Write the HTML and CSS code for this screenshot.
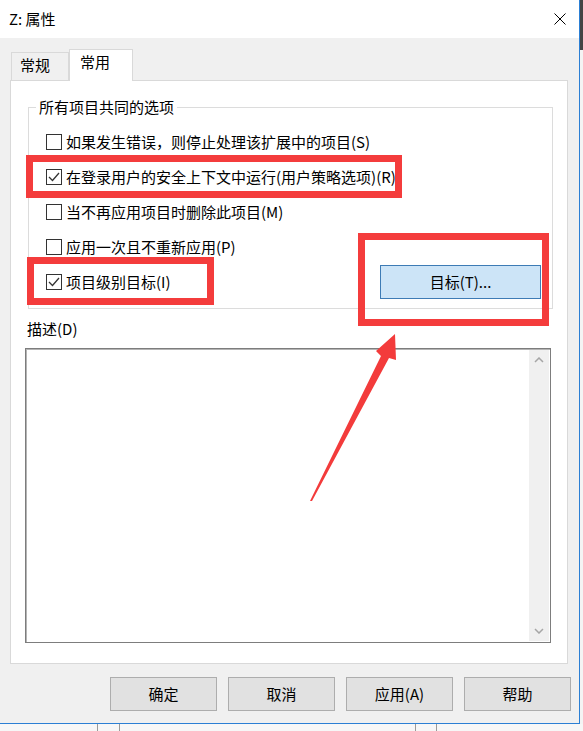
FILE: index.html
```html
<!DOCTYPE html>
<html lang="zh-CN">
<head>
<meta charset="utf-8">
<title>Z: 属性</title>
<link rel="stylesheet" href="styles.css">
</head>
<body>
<div class="screen">
  <div class="window">
    <div class="titlebar">
      <span class="title">Z: 属性</span>
      <svg class="close" width="12" height="12" viewBox="0 0 12 12"><path d="M0.5 0.5 L11.5 11.5 M11.5 0.5 L0.5 11.5" stroke="#000" stroke-width="1" fill="none"/></svg>
    </div>
    <div class="client">
      <div class="tabs">
        <div class="tab">常规</div>
        <div class="tab active">常用</div>
      </div>
      <div class="panel">
        <fieldset class="group">
          <legend>所有项目共同的选项</legend>
          <div class="options">
            <div class="row"><span class="cb"></span>如果发生错误，则停止处理该扩展中的项目(S)</div>
            <div class="row"><span class="cb"><svg width="14" height="14" viewBox="0 0 14 14"><path d="M2 7 L5.5 10.5 L12 3" stroke="#333" stroke-width="1.3" fill="none"/></svg></span>在登录用户的安全上下文中运行(用户策略选项)(R)</div>
            <div class="row"><span class="cb"></span>当不再应用项目时删除此项目(M)</div>
            <div class="row"><span class="cb"></span>应用一次且不重新应用(P)</div>
            <div class="row"><span class="cb"><svg width="14" height="14" viewBox="0 0 14 14"><path d="M2 7 L5.5 10.5 L12 3" stroke="#333" stroke-width="1.3" fill="none"/></svg></span>项目级别目标(I)<button class="target">目标(T)...</button></div>
          </div>
        </fieldset>
        <div class="desc-label">描述(D)</div>
        <div class="desc">
          <div class="desc-text"></div>
          <div class="vscroll">
            <span class="arrow"><svg width="10" height="6" viewBox="0 0 10 6"><path d="M1 5 L5 1 L9 5" stroke="#a6a6a6" stroke-width="1.5" fill="none"/></svg></span>
            <span class="arrow"><svg width="10" height="6" viewBox="0 0 10 6"><path d="M1 1 L5 5 L9 1" stroke="#a6a6a6" stroke-width="1.5" fill="none"/></svg></span>
          </div>
        </div>
      </div>
      <div class="buttons">
        <button class="btn">确定</button>
        <button class="btn">取消</button>
        <button class="btn">应用(A)</button>
        <button class="btn">帮助</button>
      </div>
    </div>
  </div>
  <div class="edge"></div>

  <div class="mark mark-run"></div>
  <div class="mark mark-level"></div>
  <div class="mark mark-target"></div>
  <svg class="pointer" width="583" height="731" viewBox="0 0 583 731">
    <polygon points="310,501 381,356 376,351 395,334 396,360 389,358 312,501" fill="#f33b3b"/>
  </svg>
</div>
<div class="taskbar"></div>
</body>
</html>
```

FILE: styles.css
```css
* { box-sizing: border-box; }

html, body {
  margin: 0;
  padding: 0;
  background: #f7f7f7;
}

body {
  font-family: "Noto Sans CJK SC", "Microsoft YaHei", sans-serif;
  font-size: 15px;
  line-height: 20px;
  color: #000;
  width: 583px;
  height: 731px;
  overflow: hidden;
}

.screen {
  position: relative;
  display: flex;
  height: 724px;
}

.window {
  width: 580px;
  height: 724px;
  background: #f0f0f0;
  border-right: 1px solid #2b7fd4;
  border-bottom: 1px solid #2b7fd4;
  display: flex;
  flex-direction: column;
}

.edge {
  width: 3px;
  height: 724px;
  background: linear-gradient(#444 0 50px, #f4f4f4 50px);
}

.titlebar {
  height: 38px;
  background: #fff;
  display: flex;
  align-items: center;
  justify-content: space-between;
  padding: 0 13px 0 9px;
}

.title { font-size: 15px; }

.close { display: block; }

.client {
  padding-top: 11px;
  flex: 1;
}

.tabs {
  display: flex;
  align-items: flex-end;
  height: 31px;
  margin-left: 11px;
}

.tab {
  height: 28px;
  width: 58px;
  padding: 2px 0 0 8px;
  border: 1px solid #d9d9d9;
  border-bottom: none;
  background: #f0f0f0;
}

.tab.active {
  position: relative;
  z-index: 1;
  height: 32px;
  width: 64px;
  margin-bottom: -1px;
  padding-left: 10px;
  background: #fff;
}

.panel {
  margin-left: 10px;
  width: 558px;
  height: 584px;
  background: #fff;
  border: 1px solid #d9d9d9;
  padding-top: 0;
}

.group {
  margin: 16px 0 0 17px;
  width: 525px;
  min-width: 0;
  border: 1px solid #dcdcdc;
  padding: 15px 11px 16px 17px;
}

.group legend {
  padding: 0 3px;
  margin-left: -10px;
  line-height: 20px;
}

.options {
  display: flex;
  flex-direction: column;
  gap: 15px;
}

.row {
  display: flex;
  align-items: center;
  height: 20px;
  white-space: nowrap;
}

.cb {
  width: 16px;
  height: 16px;
  border: 1px solid #333;
  background: #fff;
  margin-right: 4px;
  flex: none;
  display: flex;
  align-items: center;
  justify-content: center;
}

.cb svg { display: block; }

.target {
  margin: -7px 0 -7px auto;
  width: 161px;
  height: 34px;
  background: #cce4f7;
  border: 1px solid #3d7bb5;
  font: inherit;
  color: #000;
  padding: 0;
}

.desc-label {
  margin: 10px 0 0 16px;
}

.desc {
  margin: 9px 0 0 14px;
  width: 526px;
  height: 295px;
  border: 1px solid #7d7d7d;
  box-shadow: inset 1px 1px 0 #b4b4b4;
  display: flex;
  background: #fff;
}

.desc-text { flex: 1; }

.vscroll {
  width: 20px;
  margin: 1px;
  background: #f0f0f0;
  display: flex;
  flex-direction: column;
  justify-content: space-between;
}

.arrow {
  height: 20px;
  display: flex;
  align-items: center;
  justify-content: center;
}

.arrow svg { display: block; }

.buttons {
  margin-top: 13px;
  display: flex;
  justify-content: flex-end;
  gap: 11px;
  padding-right: 8px;
}

.btn {
  width: 107px;
  height: 34px;
  background: #e1e1e1;
  border: 1px solid #adadad;
  font: inherit;
  color: #000;
  padding: 0;
}

.mark {
  position: absolute;
  border: 7px solid #f43c3c;
}

.mark-run { left: 26px; top: 155px; width: 376px; height: 43px; }
.mark-level { left: 27px; top: 257px; width: 187px; height: 48px; }
.mark-target { left: 358px; top: 233px; width: 191px; height: 93px; }

.pointer {
  position: absolute;
  left: 0;
  top: 0;
  pointer-events: none;
}

.taskbar {
  height: 7px;
  background:
    linear-gradient(to right,
      transparent 97px, #9a9a9a 97px 98px,
      transparent 98px 119px, #9a9a9a 119px 120px,
      transparent 120px 415px, #9a9a9a 415px 416px,
      transparent 416px 436px, #9a9a9a 436px 437px,
      transparent 437px),
    #f7f7f7;
}
```
